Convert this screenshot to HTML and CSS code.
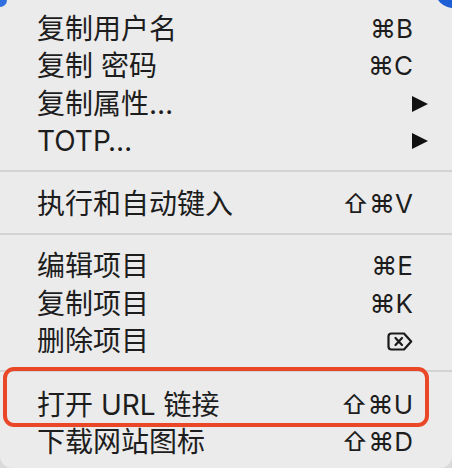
FILE: index.html
```html
<!DOCTYPE html>
<html lang="zh-CN">
<head>
<meta charset="utf-8">
<link rel="stylesheet" href="styles.css">
</head>
<body>
<div class="menu">
  <span class="blob blob-left"></span>
  <span class="blob blob-right"></span>
  <div class="group group-first">
    <div class="row"><span class="label">复制用户名</span><span class="key">⌘B</span></div>
    <div class="row"><span class="label">复制 密码</span><span class="key">⌘C</span></div>
    <div class="row"><span class="label">复制属性…</span><span class="arrow"><svg viewBox="0 0 16 16" width="16" height="16"><polygon points="0,0 16,8 0,16" fill="#111"/></svg></span></div>
    <div class="row"><span class="label">TOTP…</span><span class="arrow"><svg viewBox="0 0 16 16" width="16" height="16"><polygon points="0,0 16,8 0,16" fill="#111"/></svg></span></div>
  </div>
  <div class="sep"></div>
  <div class="group">
    <div class="row"><span class="label">执行和自动键入</span><span class="key">⇧⌘V</span></div>
  </div>
  <div class="sep"></div>
  <div class="group">
    <div class="row"><span class="label">编辑项目</span><span class="key">⌘E</span></div>
    <div class="row"><span class="label">复制项目</span><span class="key">⌘K</span></div>
    <div class="row"><span class="label">删除项目</span><span class="key"><svg class="del" viewBox="0 0 26 19" width="26" height="19"><path d="M4.5 1.5 H17 L24.2 9.5 L17 17.5 H4.5 Q1.5 17.5 1.5 14.5 V4.5 Q1.5 1.5 4.5 1.5 Z" fill="none" stroke="#1a1a1a" stroke-width="2.2" stroke-linejoin="round"/><path d="M8.5 6 L15 13 M15 6 L8.5 13" stroke="#1a1a1a" stroke-width="2.2" stroke-linecap="round"/></svg></span></div>
  </div>
  <div class="sep sep-last"></div>
  <div class="group">
    <div class="row highlight"><span class="label">打开 URL 链接</span><span class="key">⇧⌘U</span></div>
    <div class="row"><span class="label">下载网站图标</span><span class="key">⇧⌘D</span></div>
  </div>
</div>
</body>
</html>
```
FILE: styles.css
```css
html, body {
  margin: 0;
  padding: 0;
}
body {
  width: 452px;
  height: 468px;
  background: #d9d9d9;
  overflow: hidden;
  font-family: "Inter", "Noto Sans CJK SC", sans-serif;
  color: #1d1d1d;
}
.menu {
  position: relative;
  width: 452px;
  height: 468px;
  background: #ebebeb;
  border-radius: 0 0 12px 12px;
  box-sizing: border-box;
  padding-top: 10px;
}
.blob {
  position: absolute;
  border-radius: 50%;
  background: #2f6fe0;
}
.blob-left {
  width: 14px;
  height: 14px;
  left: -7px;
  top: -7px;
}
.blob-right {
  width: 40px;
  height: 40px;
  right: -22px;
  top: -32px;
  background: #1f5fd6;
}
.row {
  display: flex;
  align-items: center;
  justify-content: space-between;
  height: 37.5px;
  padding: 0 39px 0 37px;
  font-size: 28px;
  line-height: 1;
  position: relative;
}
.label {
  white-space: pre;
}
.key {
  display: flex;
  align-items: center;
  font-family: "Inter", "DejaVu Sans", sans-serif;
  font-size: 26px;
}
.arrow {
  display: flex;
  align-items: center;
  margin-right: -15px;
}
.sep {
  height: 2px;
  background: #d3d3d3;
  margin: 10px 0 13px;
}
.sep-last {
  margin: 10px 0 14px;
}
.highlight::before {
  content: "";
  position: absolute;
  left: 3px;
  right: 23px;
  top: -19px;
  bottom: -3px;
  border: 4.5px solid #ea4628;
  border-radius: 11px;
}
```
